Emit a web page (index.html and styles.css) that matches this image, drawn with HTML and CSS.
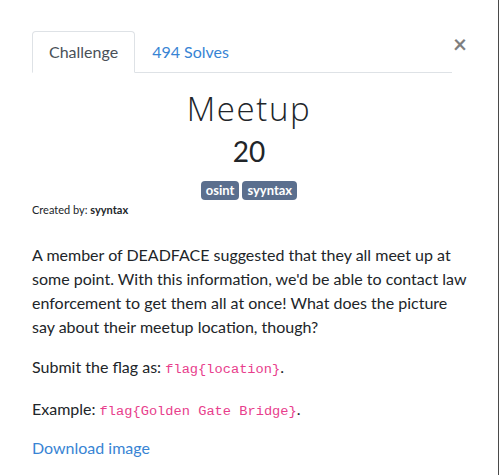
FILE: index.html
```html
<!DOCTYPE html>
<html lang="en">
<head>
<meta charset="utf-8">
<title>Meetup</title>
<link rel="stylesheet" href="styles.css">
</head>
<body>
<div class="modal">
  <div class="modal-head">
    <ul class="tabs">
      <li class="tab active">Challenge</li>
      <li class="tab link">494 Solves</li>
    </ul>
    <button class="close" aria-label="Close">×</button>
  </div>
  <div class="challenge">
    <h3 class="name">Meetup</h3>
    <h4 class="value">20</h4>
    <div class="tags">
      <span class="badge">osint</span>
      <span class="badge">syyntax</span>
    </div>
    <div class="author">Created by: <b>syyntax</b></div>
    <div class="desc">
      <p>A member of DEADFACE suggested that they all meet up at some point. With this information, we'd be able to contact law enforcement to get them all at once! What does the picture say about their meetup location, though?</p>
      <p>Submit the flag as: <code>flag{location}</code>.</p>
      <p>Example: <code>flag{Golden Gate Bridge}</code>.</p>
      <p class="last"><a href="#" class="dl">Download image</a></p>
    </div>
  </div>
</div>
</body>
</html>
```
FILE: styles.css
```css
* { box-sizing: border-box; }
html, body { margin: 0; padding: 0; background: #fff; }
body {
  font-family: Lato, "Open Sans", sans-serif;
  color: #212529;
  font-size: 16px;
  line-height: 1.5;
}
.modal {
  width: 499px;
  height: 475px;
  border-right: 1px solid #4a4a4a;
  padding: 31px 32px 0 32px;
  overflow: hidden;
}
.modal-head {
  display: flex;
  align-items: flex-start;
  padding-right: 14px;
  position: relative;
}
.tabs {
  list-style: none;
  margin: 0;
  padding: 0;
  display: flex;
  flex: 1;
  border-bottom: 1px solid #dee2e6;
}
.tab {
  padding: 8px 16px;
  border: 1px solid transparent;
  border-top-left-radius: 4px;
  border-top-right-radius: 4px;
  margin-bottom: -1px;
}
.tab.active {
  color: #495057;
  border-color: #dee2e6 #dee2e6 #fff;
  background: #fff;
}
.tab.link { color: #3884d4; }
.close {
  position: absolute;
  right: -2px;
  top: 1px;
  border: 0;
  background: none;
  padding: 0;
  font-family: Lato, sans-serif;
  font-size: 24px;
  font-weight: 700;
  line-height: 24px;
  color: #000;
  opacity: .5;
  width: 16px;
}
.challenge { padding-top: 16px; }
.name {
  margin: 0;
  text-align: center;
  font-family: "Open Sans", sans-serif;
  font-weight: 300;
  font-size: 33px;
  letter-spacing: 1.6px;
  line-height: 40px;
  color: #212529;
}
.value {
  margin: 0;
  text-align: center;
  font-weight: 400;
  font-size: 28px;
  line-height: 34px;
  margin-top: 5px;
}
.tags {
  display: flex;
  justify-content: center;
  gap: 3px;
  margin-top: 13px;
}
.badge {
  background: #5b6f8e;
  color: #fff;
  font-weight: 700;
  font-size: 13px;
  line-height: 19px;
  padding: 0 5px;
  border-radius: 4px;
}
.author {
  font-size: 11px;
  line-height: 16px;
  margin-top: 2px;
}
.desc { margin-top: 25px; margin-right: -4px; }
.desc p { margin: 0 0 16px 0; }
.desc p.last { margin-top: -2px; }
code {
  font-family: "Liberation Mono", monospace;
  font-size: 13.7px;
  color: #e83e8c;
}
.dl { color: #3884d4; text-decoration: none; }
```
